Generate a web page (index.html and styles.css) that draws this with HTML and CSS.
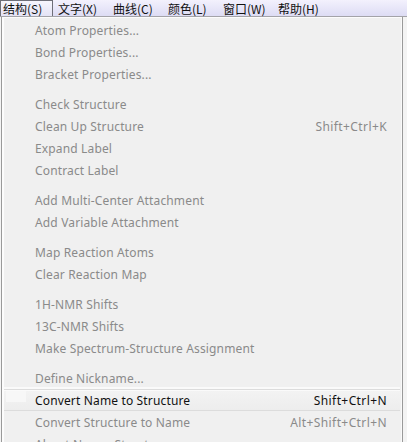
FILE: index.html
```html
<!DOCTYPE html>
<html lang="zh">
<head>
<meta charset="utf-8">
<title>结构菜单</title>
<link rel="stylesheet" href="styles.css">
</head>
<body>
<div class="menubar">
  <span class="mb-item active">结构(S)</span>
  <span class="mb-item">文字(X)</span>
  <span class="mb-item">曲线(C)</span>
  <span class="mb-item">颜色(L)</span>
  <span class="mb-item">窗口(W)</span>
  <span class="mb-item">帮助(H)</span>
</div>
<div class="menu">
  <div class="row dis"><span>Atom Properties...</span></div>
  <div class="row dis"><span>Bond Properties...</span></div>
  <div class="row dis"><span>Bracket Properties...</span></div>
  <div class="sep"></div>
  <div class="row dis"><span>Check Structure</span></div>
  <div class="row dis"><span>Clean Up Structure</span><span class="key">Shift+Ctrl+K</span></div>
  <div class="row dis"><span>Expand Label</span></div>
  <div class="row dis"><span>Contract Label</span></div>
  <div class="sep"></div>
  <div class="row dis"><span>Add Multi-Center Attachment</span></div>
  <div class="row dis"><span>Add Variable Attachment</span></div>
  <div class="sep"></div>
  <div class="row dis"><span>Map Reaction Atoms</span></div>
  <div class="row dis"><span>Clear Reaction Map</span></div>
  <div class="sep"></div>
  <div class="row dis"><span>1H-NMR Shifts</span></div>
  <div class="row dis"><span>13C-NMR Shifts</span></div>
  <div class="row dis"><span>Make Spectrum-Structure Assignment</span></div>
  <div class="sep"></div>
  <div class="row dis"><span>Define Nickname...</span></div>
  <div class="row hot"><span class="icon-cell"></span><span>Convert Name to Structure</span><span class="key">Shift+Ctrl+N</span></div>
  <div class="row dis"><span>Convert Structure to Name</span><span class="key">Alt+Shift+Ctrl+N</span></div>
  <div class="row dis"><span>About Name=Struct...</span></div>
</div>
</body>
</html>
```
FILE: styles.css
```css
html, body {
  margin: 0;
  padding: 0;
  background: #f4f4f4;
  overflow: hidden;
}
body {
  width: 407px;
  height: 442px;
  font-family: "Noto Sans", "Noto Sans CJK SC", sans-serif;
  font-size: 12px;
}
.menubar {
  height: 16px;
  display: flex;
  align-items: stretch;
  gap: 2px;
  background: linear-gradient(#f3f1fd, #dddcf4);
  border-bottom: 1px solid #a3a3a8;
}
.mb-item {
  box-sizing: border-box;
  width: 53px;
  font-family: "Noto Sans CJK SC", sans-serif;
  font-size: 12px;
  line-height: 15px;
  padding: 0 0 0 2px;
  color: #111;
  border: 1px solid transparent;
  border-bottom: none;
  white-space: nowrap;
}
.active {
  border-color: #6e6e78;
  background: linear-gradient(#f6f5fd, #e4e3f5);
}
.menu {
  width: 400px;
  background: #f0f0f0;
  border-left: 1px solid #9a9a9a;
  border-right: 1px solid #9a9a9a;
  box-shadow: inset 2px 0 0 #fcfcfc, inset 0 1px 0 #fcfcfc, inset -1px 0 0 #fafafa;
  padding-top: 2px;
  margin-left: 1px;
  height: 440px;
}
.row {
  height: 22px;
  display: flex;
  align-items: center;
  justify-content: space-between;
  padding: 0 15px 0 33px;
  color: #8a8a8a;
  letter-spacing: 0.15px;
  white-space: nowrap;
}
.sep {
  height: 8px;
}
.hot {
  position: relative;
  color: #111;
  margin: 0 2px;
  padding-left: 31px;
  padding-right: 13px;
  height: 20px;
  border-top: 1px solid #dcdcdc;
  border-bottom: 1px solid #dcdcdc;
  box-shadow: inset 0 1px 0 #fafafa, 0 -2px 0 #fafafa;
  background: linear-gradient(#f3f3f3, #ededed);
}
.icon-cell {
  position: absolute;
  left: 2px;
  top: 1px;
  width: 20px;
  height: 11px;
  background: #f7f7f7;
}
.key {
  text-align: right;
  letter-spacing: 0.4px;
}
```
